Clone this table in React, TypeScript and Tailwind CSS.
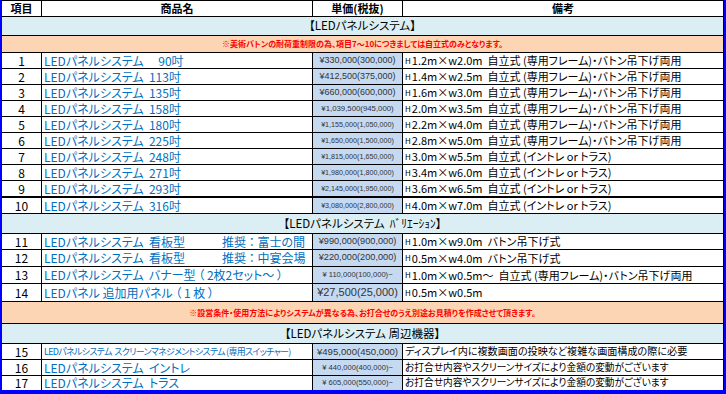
import React from 'react';

type Row = {
  no: number;
  name: React.ReactNode;
  nameSize?: string;
  price: string;
  priceSize: string;
  h?: boolean;
  note: string;
  noteSize?: string;
  height: string;
  thickTop?: boolean;
};

const FRAME = '自立式 (専用フレーム)・バトン吊下げ両用';
const TRUSS = '自立式 (イントレ or トラス)';

const group1: Row[] = [
  { no: 1, name: 'LEDパネルシステム　 90吋', price: '¥330,000(300,000)', priceSize: 'text-[9px]', h: true, note: `1.2m×w2.0m  ${FRAME}`, height: 'h-[15px]' },
  { no: 2, name: 'LEDパネルシステム  113吋', price: '¥412,500(375,000)', priceSize: 'text-[9px]', h: true, note: `1.4m×w2.5m  ${FRAME}`, height: 'h-[15px]' },
  { no: 3, name: 'LEDパネルシステム  135吋', price: '¥660,000(600,000)', priceSize: 'text-[9px]', h: true, note: `1.6m×w3.0m  ${FRAME}`, height: 'h-[15px]' },
  { no: 4, name: 'LEDパネルシステム  158吋', price: '¥1,039,500(945,000)', priceSize: 'text-[7.8px]', h: true, note: `2.0m×w3.5m  ${FRAME}`, height: 'h-[15px]' },
  { no: 5, name: 'LEDパネルシステム  180吋', price: '¥1,155,000(1,050,000)', priceSize: 'text-[7.2px]', h: true, note: `2.2m×w4.0m  ${FRAME}`, height: 'h-[15px]' },
  { no: 6, name: 'LEDパネルシステム  225吋', price: '¥1,650,000(1,500,000)', priceSize: 'text-[7.2px]', h: true, note: `2.8m×w5.0m  ${FRAME}`, height: 'h-[15px]' },
  { no: 7, name: 'LEDパネルシステム  248吋', price: '¥1,815,000(1,650,000)', priceSize: 'text-[7.2px]', h: true, note: `3.0m×w5.5m  ${TRUSS}`, height: 'h-[15px]' },
  { no: 8, name: 'LEDパネルシステム  271吋', price: '¥1,980,000(1,800,000)', priceSize: 'text-[7.2px]', h: true, note: `3.4m×w6.0m  ${TRUSS}`, height: 'h-[15px]' },
  { no: 9, name: 'LEDパネルシステム  293吋', price: '¥2,145,000(1,950,000)', priceSize: 'text-[7.2px]', h: true, note: `3.6m×w6.5m  ${TRUSS}`, height: 'h-[15px]' },
  { no: 10, name: 'LEDパネルシステム  316吋', price: '¥3,080,000(2,800,000)', priceSize: 'text-[7.2px]', h: true, note: `4.0m×w7.0m  ${TRUSS}`, height: 'h-[16px]', thickTop: true },
];

const withTag = (left: string, tag: string) => (
  <span className="flex">
    <span className="w-[178px] whitespace-pre">{left}</span>
    <span>{tag}</span>
  </span>
);

const group2: Row[] = [
  { no: 11, name: withTag('LEDパネルシステム  看板型', '推奨 ： 富士の間'), price: '¥990,000(900,000)', priceSize: 'text-[9.2px]', h: true, note: '1.0m×w9.0m  バトン吊下げ式', height: 'h-[15px]' },
  { no: 12, name: withTag('LEDパネルシステム  看板型', '推奨 ： 中宴会場'), price: '¥220,000(200,000)', priceSize: 'text-[9.2px]', h: true, note: '0.5m×w4.0m  バトン吊下げ式', height: 'h-[16px]' },
  { no: 13, name: 'LEDパネルシステム  バナー型 （ 2枚2セット～ ）', price: '¥ 110,000(100,000)~', priceSize: 'text-[7.6px]', h: true, note: `1.0m×w0.5m～  ${FRAME}`, height: 'h-[16px]' },
  { no: 14, name: 'LEDパネル 追加用パネル （ 1 枚 ）', price: '¥27,500(25,000)', priceSize: 'text-[11px]', h: true, note: '0.5m×w0.5m', height: 'h-[17px]' },
];

const group3: Row[] = [
  { no: 15, name: 'LEDパネルシステム  スクリーンマネジメントシステム (専用スイッチャー)', nameSize: 'text-[9px] tracking-[-0.7px]', price: '¥495,000(450,000)', priceSize: 'text-[9.6px]', note: 'ディスプレイ内に複数画面の投映など複雑な画面構成の際に必要', noteSize: 'text-[10.1px]', height: 'h-[15px]' },
  { no: 16, name: 'LEDパネルシステム  イントレ', price: '¥ 440,000(400,000)~', priceSize: 'text-[7.6px]', note: 'お打合せ内容やスクリーンサイズにより金額の変動がございます', noteSize: 'text-[9.7px]', height: 'h-[15px]' },
  { no: 17, name: 'LEDパネルシステム  トラス', price: '¥ 605,000(550,000)~', priceSize: 'text-[7.6px]', note: 'お打合せ内容やスクリーンサイズにより金額の変動がございます', noteSize: 'text-[9.7px]', height: 'h-[14px]' },
];

const jp = "font-['Noto_Sans_CJK_JP',sans-serif] [font-feature-settings:'palt']";

const DataRow = ({ row }: { row: Row }) => {
  const top = row.thickTop ? 'border-t border-black' : '';
  return (
    <>
      <div className={`${row.height} ${top} bg-white flex items-center justify-center text-[12px] leading-none text-black`}>
        {row.no}
      </div>
      <div className={`${row.height} ${top} bg-white flex items-center pl-[2px] ${row.nameSize ?? 'text-[12px]'} leading-none text-[#0070c0] whitespace-pre`}>
        {row.name}
      </div>
      <div className={`${row.height} ${top} bg-[#c5d9f1] flex items-center justify-center ${row.priceSize} leading-none text-[#333] font-['Liberation_Sans',sans-serif] whitespace-pre`}>
        {row.price}
      </div>
      <div className={`${row.height} ${top} bg-white flex items-center pl-[2px] ${row.noteSize ?? 'text-[11px]'} leading-none text-black whitespace-pre`}>
        {row.h && <span className="text-[8px] mr-[1px]">H</span>}
        {row.note}
      </div>
    </>
  );
};

const Section = ({ children, height }: { children: React.ReactNode; height: string }) => (
  <div className={`col-span-4 ${height} bg-[#daeef3] flex items-center justify-center text-[11.5px] leading-none text-black whitespace-pre`}>
    {children}
  </div>
);

const Notice = ({ text, height }: { text: string; height: string }) => (
  <div className={`col-span-4 ${height} bg-[#fcd5b4] flex items-center justify-center text-[8px] font-bold leading-none text-[#ff0000]`}>
    {text}
  </div>
);

export default function App() {
  return (
    <div className={`w-[726px] h-[394px] bg-white ${jp}`}>
      <div className="grid grid-cols-[39px_270px_89px_320px] gap-px bg-black pt-px pr-px border-l-2 border-r-2 border-b-4 border-[#0000ff]">
        {['項目', '商品名', '単価(税抜)', '備考'].map((h) => (
          <div key={h} className="h-[15px] bg-white flex items-center justify-center text-[11px] font-bold leading-none text-black">
            {h}
          </div>
        ))}

        <Section height="h-[18px]">【LEDパネルシステム】</Section>
        <Notice text="※美術バトンの耐荷重制限の為、項目7～10につきましては自立式のみとなります。" height="h-[16px]" />
        {group1.map((r) => (
          <DataRow key={r.no} row={r} />
        ))}

        <Section height="h-[19px]">
          【LEDパネルシステム{'  '}
          <span className="[font-feature-settings:normal]">ﾊﾞﾘｴｰｼｮﾝ</span>】
        </Section>
        {group2.map((r) => (
          <DataRow key={r.no} row={r} />
        ))}
        <Notice text="※設営条件・使用方法によりシステムが異なる為、お打合せのうえ別途お見積りを作成させて頂きます。" height="h-[21px]" />

        <Section height="h-[19px]">【LEDパネルシステム 周辺機器】</Section>
        {group3.map((r) => (
          <DataRow key={r.no} row={r} />
        ))}
      </div>
    </div>
  );
}
